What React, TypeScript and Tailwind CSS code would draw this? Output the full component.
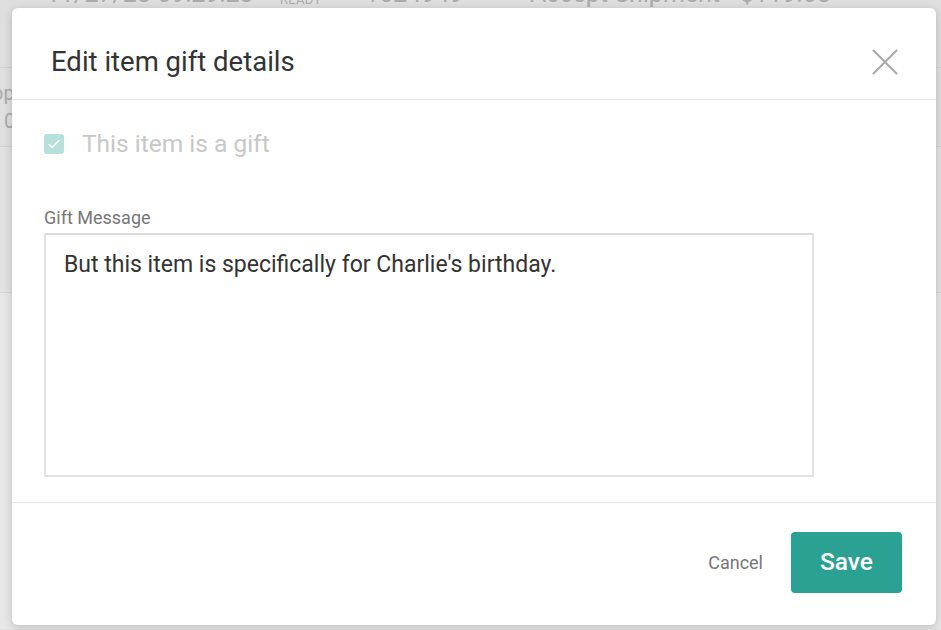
import React from "react";
import { X } from "lucide-react";

function BackgroundPage() {
  return (
    <div className="h-[630px] w-full bg-[#dfdfdf] text-[#ababab]">
      <div className="flex h-[68px] items-end border-b border-[#d2d2d2] pl-[46px] pb-[61px] text-[25px] leading-none">
        <span className="w-[234px]">11/27/23 09:29:23</span>
        <span className="w-[85px] text-[13px] tracking-wide">READY</span>
        <span className="w-[165px]">1524949</span>
        <span className="w-[210px]">Accept Shipment</span>
        <span>$119.08</span>
      </div>
      <div className="flex h-[79px] flex-col justify-center border-b border-[#d2d2d2] text-[20px] leading-[28px]">
        <span className="-ml-[8px]">op</span>
        <span className="ml-[4px]">0</span>
      </div>
      <div className="h-[146px] border-b border-[#d6d6d6] bg-[#e2e2e2]" />
      <div className="h-[336px] bg-[#e7e7e7]" />
    </div>
  );
}

export default function App() {
  return (
    <div className="relative h-[630px] w-full overflow-hidden font-['Roboto',sans-serif]">
      <BackgroundPage />
      <div className="absolute left-[12px] top-[8px] flex h-[617px] w-[924px] flex-col rounded-[6px] bg-white shadow-[0_2px_10px_rgba(0,0,0,0.18)]">
        <div className="flex h-[92px] items-center justify-between border-b border-[#e6e6e6] pl-[39px] pr-[28px] pt-[16px]">
          <h2 className="text-[27.5px] leading-none text-[#333333]">
            Edit item gift details
          </h2>
          <X className="size-[46px] text-[#aaaaaa]" strokeWidth={1.1} />
        </div>
        <div className="flex-1 pl-[32px] pt-[32px]">
          <label className="flex items-center gap-[18px]">
            <span className="flex size-[20px] items-center justify-center rounded-[3px] bg-[#b7e0da]">
              <svg viewBox="0 0 16 16" className="size-[16px]" fill="none">
                <path
                  d="M3 8.5l3.2 3L13 4.5"
                  stroke="white"
                  strokeWidth="1.5"
                  strokeLinecap="round"
                  strokeLinejoin="round"
                />
              </svg>
            </span>
            <span className="text-[24.5px] leading-[24px] text-[#c8c8c8]">
              This item is a gift
            </span>
          </label>
          <div className="mt-[52px] text-[18px] leading-[20px] text-[#777777]">
            Gift Message
          </div>
          <textarea
            className="mt-[5px] h-[244px] w-[770px] resize-none border-2 border-[#e3e3e3] border-t-[#dcdcdc] px-[18px] pt-[16px] text-[23px] leading-[28px] text-[#333333] outline-none"
            defaultValue="But this item is specifically for Charlie's birthday."
          />
        </div>
        <div className="flex h-[123px] items-center justify-end gap-[28px] border-t border-[#e6e6e6] pb-[4px] pr-[34px]">
          <button className="text-[18px] text-[#777777]">Cancel</button>
          <button className="h-[61px] w-[111px] rounded-[4px] bg-[#2ba193] text-[24.5px] font-medium text-white">
            Save
          </button>
        </div>
      </div>
    </div>
  );
}
